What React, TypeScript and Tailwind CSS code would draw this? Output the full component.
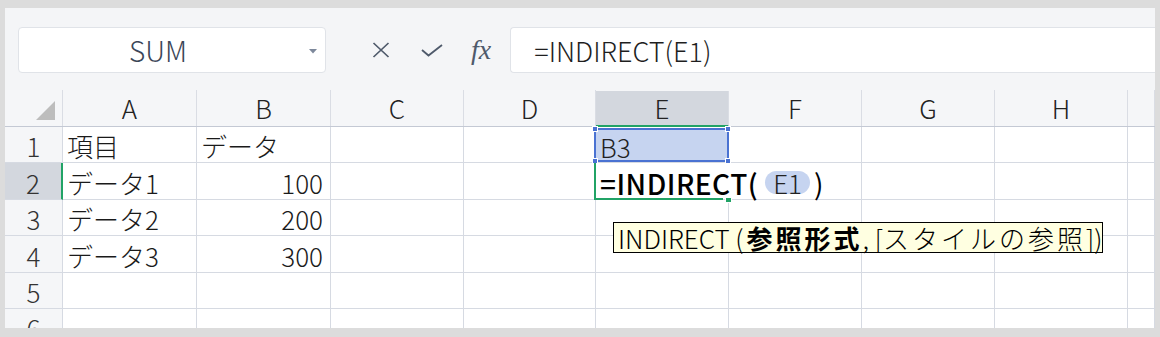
import React from 'react'

const cols = ['A', 'B', 'C', 'D', 'E', 'F', 'G', 'H', '']
const rowHeights = ['h-[36px]', 'h-[37px]', 'h-[36px]', 'h-[37px]', 'h-[36px]', 'h-[36px]']

const data: Record<string, string> = {
  A1: '項目',
  B1: 'データ',
  A2: 'データ1',
  B2: '100',
  A3: 'データ2',
  B3: '200',
  A4: 'データ3',
  B4: '300',
}

const gridCols =
  'grid grid-cols-[58px_134px_134px_133px_132px_133px_133px_133px_133px_1fr]'

function Toolbar() {
  return (
    <div className="h-[82px] bg-[#f4f5f7] flex items-start pt-[19px] pl-[13px] shrink-0">
      <div className="relative w-[308px] h-[46px] bg-white border border-[#e0e3e8] rounded-[4px] flex items-center justify-center pr-[28px] text-[28px] font-light text-[#3b4658] leading-none">
        SUM
        <svg className="absolute right-[8px] top-[21px]" width="8" height="5" viewBox="0 0 8 5">
          <path d="M0 0 H8 L4 4.5 Z" fill="#7d889b" />
        </svg>
      </div>
      <div className="flex items-center h-[46px] ml-[46px] gap-[31px]">
        <svg width="18" height="16" viewBox="0 0 18 16">
          <path d="M1.5 1 L16.5 15 M16.5 1 L1.5 15" stroke="#4f5a6b" strokeWidth="1.7" fill="none" />
        </svg>
        <svg width="22" height="13" viewBox="0 0 22 13">
          <path d="M1 6 L7.5 11.5 L21 1" stroke="#4f5a6b" strokeWidth="1.8" fill="none" />
        </svg>
      </div>
      <div className="h-[46px] flex items-center ml-[28px] font-['Liberation_Serif',serif] italic text-[28px] text-[#4f5a6b] leading-none">
        fx
      </div>
      <div className="flex-1 h-[46px] ml-[19px] bg-white border border-r-0 border-[#e0e3e8] rounded-l-[4px] flex items-center pl-[23px] text-[27px] font-light text-[#1f1f1f] leading-none">
        =INDIRECT(E1)
      </div>
    </div>
  )
}

function HeaderRow() {
  return (
    <div className={`${gridCols} h-[37px] bg-[#f5f6f8] border-b border-[#c4c9d4] shrink-0`}>
      <div className="border-r border-[#dadde4] flex items-end justify-end pr-[7px] pb-[6px]">
        <svg width="19" height="19" viewBox="0 0 19 19">
          <path d="M19 0 V19 H0 Z" fill="#bdbdbd" />
        </svg>
      </div>
      {cols.map((c, i) =>
        c === 'E' ? (
          <div
            key={i}
            className="bg-[#d3d7de] border-b-2 border-[#21a366] -mb-[1px] mt-[1px] border-r border-r-[#dadde4] flex items-center justify-center text-[26px] font-light text-[#222] leading-none"
          >
            {c}
          </div>
        ) : (
          <div
            key={i}
            className="border-r border-[#dadde4] flex items-center justify-center text-[26px] font-light text-[#222] leading-none"
          >
            {c}
          </div>
        )
      )}
    </div>
  )
}

function Tooltip() {
  return (
    <div className="absolute left-[17px] top-[59px] z-20 w-[490px] h-[31px] bg-[#ffffe1] border border-black flex items-center pl-[4px] whitespace-nowrap text-[26px] font-light leading-none text-black">
      INDIRECT (<span className="ml-[3px] font-bold tracking-[3px]">参照形式</span>, [
      <span className="tracking-[3px]">スタイルの参照</span>])
    </div>
  )
}

function DataRow({ r }: { r: number }) {
  const active = r === 2
  return (
    <div className={`${gridCols} ${rowHeights[r - 1]} shrink-0`}>
      <div
        className={
          active
            ? 'bg-[#d3d7de] border-b border-[#d6dae2] border-r-[2px] border-r-[#21a366] flex items-center justify-center pt-[3px] text-[26px] font-light text-[#333] leading-none'
            : 'bg-[#f5f6f8] border-b border-[#d6dae2] border-r border-r-[#d6dae2] flex items-center justify-center pt-[3px] text-[26px] font-light text-[#333] leading-none'
        }
      >
        {r}
      </div>
      {cols.map((c, i) => {
        const key = `${c}${r}`
        if (key === 'E1') {
          return (
            <div key={i} className="relative border-b border-r border-[#d6dae2]">
              <div className="absolute -left-[2px] -right-[1px] top-[1px] bottom-0 bg-[#c6d4f0] border-2 border-[#4a72d2] flex items-center pl-[4px] pt-[3px] text-[26px] font-light text-[#222] leading-none z-10">
                B3
                <span className="absolute -left-[4px] -top-[4px] w-[6px] h-[6px] bg-[#4a72d2] border border-white" />
                <span className="absolute -right-[4px] -top-[4px] w-[6px] h-[6px] bg-[#4a72d2] border border-white" />
                <span className="absolute -left-[4px] -bottom-[4px] w-[6px] h-[6px] bg-[#4a72d2] border border-white" />
                <span className="absolute -right-[4px] -bottom-[4px] w-[6px] h-[6px] bg-[#4a72d2] border border-white" />
              </div>
            </div>
          )
        }
        if (key === 'E2') {
          return (
            <div key={i} className="relative border-b border-[#d6dae2]">
              <div className="absolute -left-[2px] right-[6px] top-0 -bottom-[1px] border-l-2 border-b-2 border-[#21a366] z-10" />
              <span className="absolute right-[-3px] bottom-[-4px] w-[7px] h-[6px] bg-[#21a366] border border-white z-10" />
              <div className="absolute left-[4px] top-0 bottom-0 flex items-center pt-[3px] whitespace-nowrap text-[28px] font-medium tracking-[0.5px] text-black leading-none z-10">
                =INDIRECT(
                <span className="ml-[7px] mr-[4px] px-[8px] h-[23px] rounded-full bg-[#c6d4f0] font-light tracking-normal flex items-center text-[26px] text-[#222]">
                  E1
                </span>
                <span className="font-normal">)</span>
              </div>
              <Tooltip />
            </div>
          )
        }
        const v = data[key]
        const isNum = v !== undefined && /^\d+$/.test(v)
        return (
          <div
            key={i}
            className={
              isNum
                ? 'border-b border-r border-[#d6dae2] flex items-center justify-end pr-[7px] pt-[3px] text-[26px] font-light text-[#1a1a1a] leading-none whitespace-nowrap'
                : 'border-b border-r border-[#d6dae2] flex items-center pl-[4px] pt-[3px] text-[26px] font-light text-[#1a1a1a] leading-none whitespace-nowrap'
            }
          >
            {v}
          </div>
        )
      })}
    </div>
  )
}

export default function App() {
  return (
    <div className="w-[1160px] h-[337px] bg-[#dcdcdc] pt-[8px] pl-[5px] pr-[5px] pb-[9px] font-['Noto_Sans_CJK_JP','Noto_Sans',sans-serif]">
      <div className="h-full bg-white flex flex-col overflow-hidden">
        <Toolbar />
        <HeaderRow />
        {[1, 2, 3, 4, 5, 6].map((r) => (
          <DataRow key={r} r={r} />
        ))}
      </div>
    </div>
  )
}
